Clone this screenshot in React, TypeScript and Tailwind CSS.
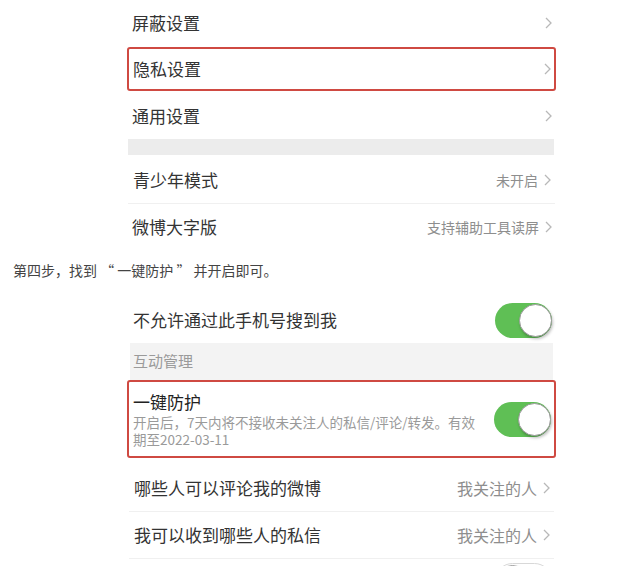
import React from 'react';

const Chevron = () => (
  <svg width="7" height="12" viewBox="0 0 7 12" className="shrink-0">
    <path d="M1 1l5 5-5 5" fill="none" stroke="#b8b8b8" strokeWidth="1.3" />
  </svg>
);

const Toggle = ({ on = true }: { on?: boolean }) => (
  <div
    className={`relative w-[57px] h-[35px] rounded-full shrink-0 ${on ? 'bg-[#5fbf55]' : 'bg-white border border-[#d8d8d8]'}`}
  >
    <div
      className={`absolute top-[1px] w-[33px] h-[33px] rounded-full bg-white border border-[#9a9a9a] shadow-[1px_2px_3px_rgba(0,0,0,0.25)] ${on ? 'right-[0px]' : 'left-[0px]'}`}
    />
  </div>
);

const NavRow = ({ label, value, big = false }: { label: string; value?: string; big?: boolean }) => (
  <div className="flex items-center justify-between h-[46px] pl-[5px] pr-[4px]">
    <span className="text-[17px] text-[#333]">{label}</span>
    <div className="flex items-center gap-[6px]">
      {value && <span className={`${big ? 'text-[16px]' : 'text-[14px]'} text-[#8e8e8e]`}>{value}</span>}
      <Chevron />
    </div>
  </div>
);

const App = () => {
  return (
    <div
      className="w-[640px] h-[566px] overflow-hidden bg-white"
      style={{ fontFamily: '"Noto Sans CJK SC", "Noto Sans", sans-serif' }}
    >
      {/* first screenshot */}
      <div className="ml-[127px] w-[429px]">
        <NavRow label="屏蔽设置" />
        <div className="flex items-center justify-between h-[44px] mt-[1px] pl-[4px] pr-[3px] border-2 border-[#cf4a42] rounded-[3px]">
          <span className="text-[17px] text-[#333]">隐私设置</span>
          <Chevron />
        </div>
        <div className="mt-[2px]">
          <NavRow label="通用设置" />
        </div>
        <div className="h-[16px] mx-[1px] mr-[2px] bg-[#ececec]" />
        <div className="mt-[2px] border-b border-[#f0f0f0] mx-[1px]">
          <NavRow label="青少年模式" value="未开启" />
        </div>
        <NavRow label="微博大字版" value="支持辅助工具读屏" />
      </div>

      {/* caption */}
      <p className="mt-[8px] ml-[13px] text-[14px] leading-[24px] text-[#444] whitespace-pre">
        第四步，找到 “ 一键防护 ” 并开启即可。
      </p>

      {/* second screenshot */}
      <div className="ml-[127px] w-[429px] mt-[15px]">
        <div className="flex items-center justify-between h-[46px] pl-[6px] pr-[4px]">
          <span className="text-[17px] text-[#333]">不允许通过此手机号搜到我</span>
          <Toggle />
        </div>
        <div className="h-[37px] ml-[3px] mr-[3px] bg-[#f3f3f3] flex items-center pl-[3px]">
          <span className="text-[15px] text-[#9a9a9a]">互动管理</span>
        </div>
        <div className="flex items-center justify-between h-[78px] pl-[4px] pr-[3px] border-2 border-[#cf4a42] rounded-[3px]">
          <div className="flex flex-col">
            <span className="text-[17px] leading-[22px] text-[#222]">一键防护</span>
            <span className="text-[13.5px] leading-[17px] text-[#9a9a9a] w-[352px] mt-[1px]">
              开启后，7天内将不接收未关注人的私信/评论/转发。有效期至2022-03-11
            </span>
          </div>
          <Toggle />
        </div>
        <div className="mt-[7px] border-b border-[#f0f0f0] mx-[2px]">
          <NavRow label="哪些人可以评论我的微博" value="我关注的人" big />
        </div>
        <div className="border-b border-[#f0f0f0] mx-[2px]">
          <NavRow label="我可以收到哪些人的私信" value="我关注的人" big />
        </div>
        <div className="flex justify-end pr-[4px] pt-[4px]">
          <Toggle on={false} />
        </div>
      </div>
    </div>
  );
};

export default App;
